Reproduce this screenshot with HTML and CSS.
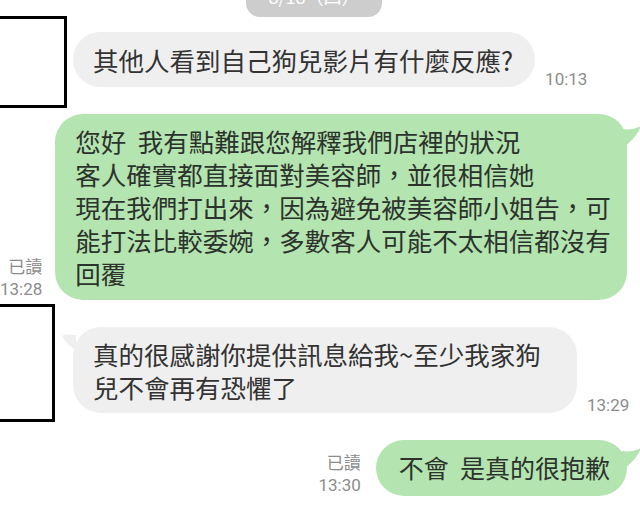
FILE: index.html
```html
<!DOCTYPE html>
<html lang="zh-Hant">
<head>
    <meta charset="UTF-8">
    <meta name="viewport" content="width=device-width, initial-scale=1.0">
    <title>聊天紀錄</title>
    <link rel="stylesheet" href="styles.css">
</head>
<body>
    <div class="chat">
        <div class="date">8/18（四）</div>

        <div class="row in">
            <div class="redact redact-a"></div>
            <div class="bubble">其他人看到自己狗兒影片有什麼反應?</div>
            <div class="meta"><span>10:13</span></div>
        </div>

        <div class="row out">
            <div class="meta"><span>已讀</span><span>13:28</span></div>
            <div class="bubble wide">您好  我有點難跟您解釋我們店裡的狀況
客人確實都直接面對美容師，並很相信她
現在我們打出來，因為避免被美容師小姐告，可
能打法比較委婉，多數客人可能不太相信都沒有
回覆<svg class="tail" viewBox="0 0 20 24"><path d="M0 3 C7 4 13 3 19 0 C16 8 10 15 0 22 Z"/></svg></div>
        </div>

        <div class="row in">
            <div class="redact redact-b"></div>
            <div class="bubble narrow">真的很感謝你提供訊息給我~至少我家狗兒不會再有恐懼了<svg class="tail" viewBox="0 0 14 18"><path d="M14 1 C9 1 4 0 1 1 C0 3 3 9 14 16 Z"/></svg></div>
            <div class="meta"><span>13:29</span></div>
        </div>

        <div class="row out">
            <div class="meta"><span>已讀</span><span>13:30</span></div>
            <div class="bubble short">不會  是真的很抱歉<svg class="tail" viewBox="0 0 20 24"><path d="M0 3 C7 4 13 3 19 0 C16 8 10 15 0 22 Z"/></svg></div>
        </div>
    </div>
</body>
</html>
```

FILE: styles.css
```css
body {
    margin: 0;
    background: #fff;
    font-family: "Noto Sans CJK TC", "Noto Sans", sans-serif;
    color: #333;
    overflow: hidden;
}
.chat {
    display: flex;
    flex-direction: column;
}
.date {
    width: 136px;
    height: 36px;
    margin: -19px 0 15px 246px;
    border-radius: 14px;
    background: #cdcdcd;
    color: #fff;
    font-size: 18px;
    line-height: 30px;
    text-align: center;
}
.row {
    display: flex;
    align-items: flex-end;
    position: relative;
}
.row + .row {
    margin-top: 27px;
}
.row.in {
    padding-left: 73px;
}
.row.out {
    justify-content: flex-end;
    padding-right: 13px;
}
.bubble {
    position: relative;
    padding: 11px 22px 11px 20px;
    border-radius: 28px;
    background: #efefef;
    font-size: 25.5px;
    line-height: 33px;
    white-space: pre-wrap;
    word-break: break-all;
}
.out .bubble {
    background: #b4e4b0;
    color: #2c332c;
}
.bubble.wide {
    width: 574px;
    box-sizing: border-box;
    padding: 10px 12px 11px 20px;
}
.bubble.narrow {
    width: 504px;
    box-sizing: border-box;
    padding: 10px 20px 10px 20px;
}
.bubble.short {
    font-size: 25px;
    padding: 11px 17px 12px 23px;
}
.tail {
    position: absolute;
    fill: #b4e4b0;
}
.out .tail {
    right: -15px;
    top: 12px;
    width: 20px;
    height: 24px;
}
.short .tail {
    top: 8px;
}
.in .tail {
    left: -11px;
    top: 7px;
    width: 14px;
    height: 18px;
    fill: #efefef;
}
.meta {
    display: flex;
    flex-direction: column;
    align-items: flex-end;
    font-family: Roboto, "Noto Sans CJK TC", sans-serif;
    font-size: 17px;
    line-height: 22px;
    color: #8c8c8c;
}
.in .meta {
    margin-left: 10px;
    line-height: 18px;
    margin-bottom: -1px;
}
.out .meta {
    margin-right: 13px;
}
.out .meta + .short {
    margin-left: 2px;
}
.redact {
    position: absolute;
    left: -3px;
    border: 3px solid #000;
    background: #fff;
}
.redact-a {
    top: -16px;
    width: 64px;
    height: 86px;
}
.redact-b {
    top: -23px;
    width: 52px;
    height: 112px;
}
```
